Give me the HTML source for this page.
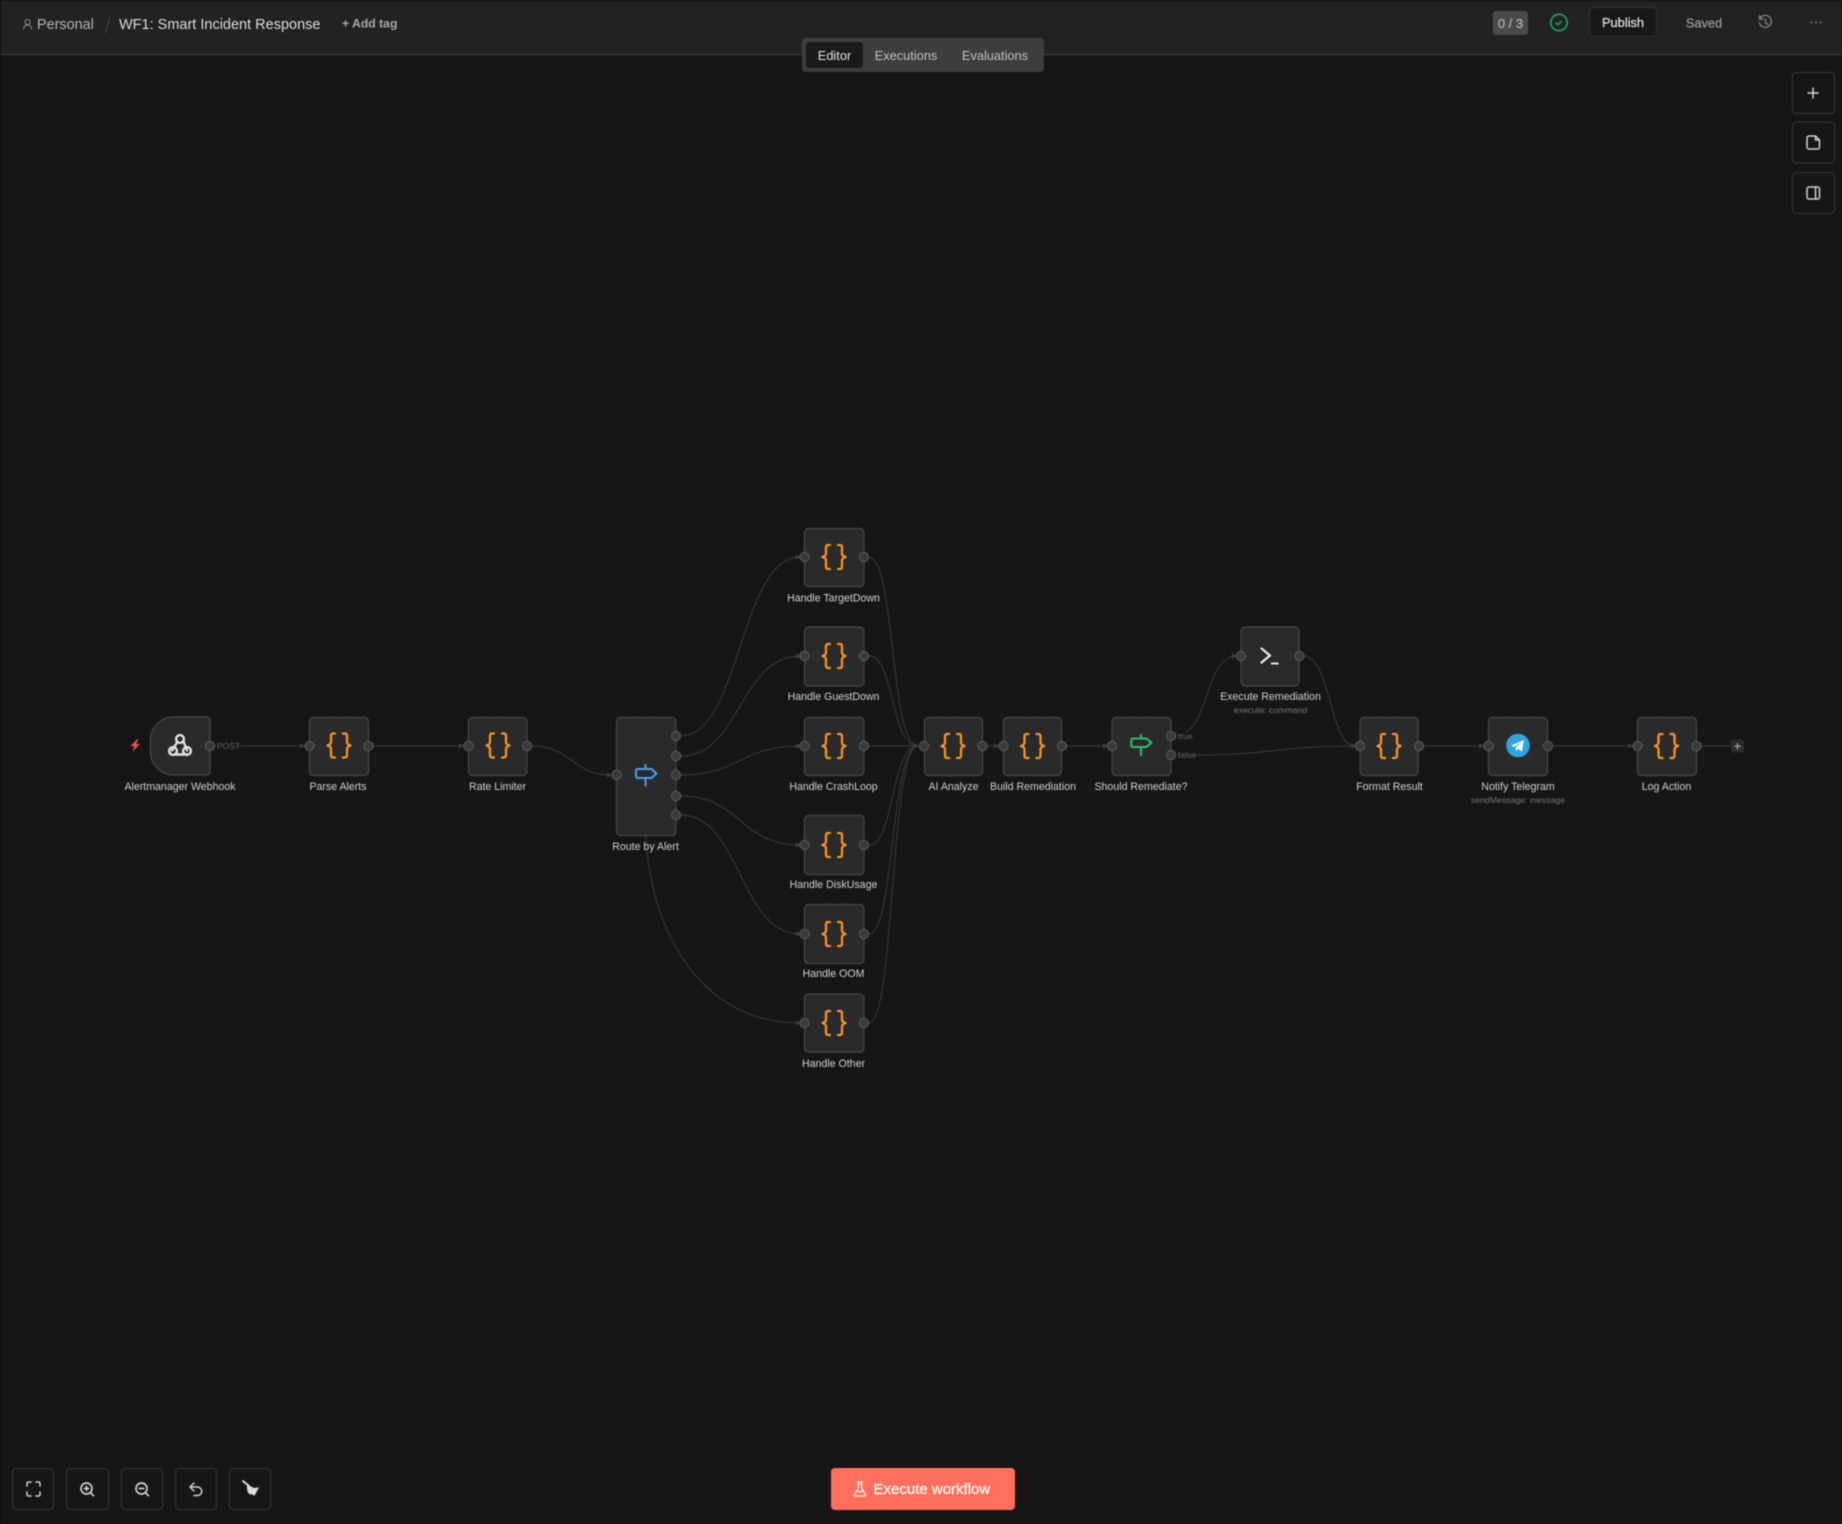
<!DOCTYPE html>
<html><head><meta charset="utf-8"><title>WF1: Smart Incident Response</title>
<style>
html,body{margin:0;padding:0;background:#161616;width:1842px;height:1524px;overflow:hidden}
svg{display:block;filter:blur(.4px)}
text{font-family:"Liberation Sans",sans-serif}
.n{fill:#2a2a2a;stroke:#484848;stroke-width:1.2}
.e{fill:none;stroke:#363636;stroke-width:1.2}
.p{fill:#3a3a3a;stroke:#565656;stroke-width:1.2}
.a{fill:#404040}
.b{fill:none;stroke:#f7931e;stroke-width:2.3;stroke-linecap:round;stroke-linejoin:round}
.l{font-size:10.6px;fill:#cfcfcf;text-anchor:middle}
.s{font-size:8.7px;fill:#777;text-anchor:middle}
.t{font-size:8.5px;fill:#666}
.c{fill:#161616;stroke:#383838;stroke-width:1.1}
.i{fill:none;stroke:#cfcfcf;stroke-width:1.5;stroke-linecap:round;stroke-linejoin:round}
.i2{fill:none;stroke:#bbb;stroke-width:1.5;stroke-linecap:round;stroke-linejoin:round}
</style></head><body>
<svg width="1842" height="1524" viewBox="0 0 1842 1524" xmlns="http://www.w3.org/2000/svg">
<defs><pattern id="g" width="19" height="19" patternUnits="userSpaceOnUse"><circle cx="9" cy="9" r=".8" fill="#1e1e1e"/></pattern></defs>
<rect width="1842" height="1524" fill="#161616"/>
<rect width="1842" height="1524" fill="url(#g)"/>

<!-- header -->
<rect x="0" y="0" width="1842" height="54" fill="#222"/>
<rect x="0" y="0" width="1842" height="1" fill="#111"/>
<rect x="0" y="54" width="1842" height="1.2" fill="#3d3d3d"/>
<rect x="0" y="0" width="1" height="1524" fill="#0e0e0e"/>
<g class="i2" style="stroke:#8f8f8f;stroke-width:1.1"><circle cx="27.500" cy="22" r="2.500"/><path d="M23.500 29c0-2.700 1.800-4 4-4s4 1.300 4 4"/></g>
<text x="37" y="29" font-size="14.400" fill="#b4b4b4">Personal</text>
<path d="M110 17 L105 33" stroke="#444" stroke-width="1.2"/>
<text x="119" y="29" font-size="14.500" fill="#dcdcdc">WF1: Smart Incident Response</text>
<text x="342" y="27.500" font-size="12.200" font-weight="bold" fill="#a8a8a8">+ Add tag</text>

<rect x="802" y="38" width="242" height="34" rx="4" fill="#3d3d3d"/>
<rect x="806" y="42" width="57" height="26" rx="4" fill="#1a1a1a"/>
<text x="834.500" y="60" font-size="12.800" fill="#e2e2e2" text-anchor="middle">Editor</text>
<text x="906" y="60" font-size="12.800" fill="#c0c0c0" text-anchor="middle">Executions</text>
<text x="995" y="60" font-size="12.800" fill="#c0c0c0" text-anchor="middle">Evaluations</text>

<rect x="1493" y="11" width="35" height="24" rx="3" fill="#4a4a4a"/>
<text x="1510.500" y="28" font-size="13" fill="#c8c8c8" text-anchor="middle">0 / 3</text>
<circle cx="1559" cy="22.500" r="8.200" fill="none" stroke="#1fa564" stroke-width="1.6"/>
<path d="M1555.800 23l2.200 1.800 3.400-3.400" fill="none" stroke="#1fa564" stroke-width="1.5" stroke-linecap="round" stroke-linejoin="round"/>
<rect x="1589.500" y="7.500" width="67" height="29" rx="4" fill="#181818" stroke="#343434"/>
<text x="1623" y="27" font-size="12.800" fill="#dcdcdc" stroke="#dcdcdc" stroke-width=".25" text-anchor="middle">Publish</text>
<text x="1704" y="27.500" font-size="12.800" fill="#9c9c9c" stroke="#9c9c9c" stroke-width=".25" text-anchor="middle">Saved</text>
<g class="i2" style="stroke:#8a8a8a;stroke-width:1.200"><path d="M1760 18.500a6 6 0 1 1-.600 4M1759.500 15.500v3.500h3.500"/><path d="M1765.500 19v4l2.500 1.500"/></g>
<g fill="#8c8c8c"><circle cx="1811.500" cy="22.500" r=".9"/><circle cx="1816" cy="22.500" r=".9"/><circle cx="1820.500" cy="22.500" r=".9"/></g>

<!-- right toolbar -->
<rect class="c" x="1792.500" y="72.500" width="42" height="41" rx="4"/>
<rect class="c" x="1792.500" y="122" width="42" height="41" rx="4"/>
<rect class="c" x="1792.500" y="172.500" width="42" height="41" rx="4"/>
<path class="i" d="M1813 88v10M1808 93h10"/>
<path class="i" d="M1807 138a2 2 0 0 1 2-2h6.500l4 4v7a2 2 0 0 1-2 2H1809a2 2 0 0 1-2-2zM1815.500 136v4h4"/>
<rect class="i" x="1807" y="187" width="12.500" height="12" rx="2"/><path class="i" d="M1815.500 187v12"/>

<!-- edges -->
<g class="e">
<path d="M238 746H304"/><path d="M373 746H463"/>
<path d="M532 746C572 746 572 775 611 775"/>
<path d="M681 736C740 736 740 557 800 557"/>
<path d="M681 756C740 756 740 656 800 656"/>
<path d="M681 775C740 775 740 746 800 746"/>
<path d="M681 796C740 796 740 845 800 845"/>
<path d="M681 815C740 815 740 934 800 934"/>
<path d="M646 835C650 930 700 1023 800 1023"/>
<path d="M869 557C895 557 890 746 918 746"/>
<path d="M869 656C895 656 890 746 918 746"/>
<path d="M869 746H918"/>
<path d="M869 845C895 845 890 746 918 746"/>
<path d="M869 934C895 934 890 746 918 746"/>
<path d="M869 1023C895 1023 890 746 918 746"/>
<path d="M987 746H998"/><path d="M1067 746H1107"/>
<path d="M1186 732C1208 720 1208 656 1236 656"/>
<path d="M1195 755C1275 755 1275 746 1355 746"/>
<path d="M1304 656C1330 656 1330 746 1355 746"/>
<path d="M1423 746H1483"/><path d="M1553 746H1632"/><path d="M1701 746H1731"/>
</g>
<g class="a">
<path d="M300 743.500l5 2.500-5 2.500z"/><path d="M459 743.500l5 2.500-5 2.500z"/><path d="M607 772.500l5 2.500-5 2.500z"/>
<path d="M796 554.500l5 2.500-5 2.500z"/><path d="M796 653.500l5 2.500-5 2.500z"/><path d="M796 743.500l5 2.500-5 2.500z"/>
<path d="M796 842.500l5 2.500-5 2.500z"/><path d="M796 931.500l5 2.500-5 2.500z"/><path d="M796 1020.500l5 2.500-5 2.500z"/>
<path d="M914 743.500l5 2.500-5 2.500z"/><path d="M994 743.500l5 2.500-5 2.500z"/><path d="M1103 743.500l5 2.500-5 2.500z"/>
<path d="M1232 653.500l5 2.500-5 2.500z"/><path d="M1351 743.500l5 2.500-5 2.500z"/><path d="M1479 743.500l5 2.500-5 2.500z"/><path d="M1628 743.500l5 2.500-5 2.500z"/>
</g>

<!-- nodes -->
<path class="n" d="M174 717H207a3 3 0 0 1 3 3V772a3 3 0 0 1-3 3H174C160 775 150.500 764 150.500 752V740C150.500 728 160 717 174 717Z"/>
<rect class="n" x="309.500" y="717.500" width="59" height="58" rx="4"/>
<rect class="n" x="468.500" y="717.500" width="58.500" height="58" rx="4"/>
<rect class="n" x="616.500" y="717.500" width="59.500" height="118" rx="4"/>
<rect class="n" x="804.500" y="528.500" width="59.500" height="58" rx="4"/>
<rect class="n" x="804.500" y="627" width="59.500" height="59" rx="4"/>
<rect class="n" x="804.500" y="717.500" width="59.500" height="58" rx="4"/>
<rect class="n" x="804.500" y="815.500" width="59.500" height="59" rx="4"/>
<rect class="n" x="804.500" y="904.500" width="59.500" height="59" rx="4"/>
<rect class="n" x="804.500" y="994" width="59.500" height="58" rx="4"/>
<rect class="n" x="924.500" y="717.500" width="58" height="58" rx="4"/>
<rect class="n" x="1003.500" y="717.500" width="58" height="58" rx="4"/>
<rect class="n" x="1112" y="717.500" width="59" height="58" rx="4"/>
<rect class="n" x="1241" y="627" width="58" height="59" rx="4"/>
<rect class="n" x="1360" y="717.500" width="58" height="58" rx="4"/>
<rect class="n" x="1488.500" y="717.500" width="59" height="58" rx="4"/>
<rect class="n" x="1637.500" y="717.500" width="59" height="58" rx="4"/>

<!-- ports -->
<g class="p">
<circle cx="210" cy="746" r="4.600"/>
<circle cx="309.500" cy="746" r="4.600"/><circle cx="368.500" cy="746" r="4.600"/>
<circle cx="468.500" cy="746" r="4.600"/><circle cx="527" cy="746" r="4.600"/>
<circle cx="616.500" cy="775" r="4.600"/>
<circle cx="676" cy="736" r="4.600"/><circle cx="676" cy="756" r="4.600"/><circle cx="676" cy="775" r="4.600"/><circle cx="676" cy="796" r="4.600"/><circle cx="676" cy="815" r="4.600"/>
<circle cx="804.500" cy="557" r="4.600"/><circle cx="864" cy="557" r="4.600"/>
<circle cx="804.500" cy="656" r="4.600"/><circle cx="864" cy="656" r="4.600"/>
<circle cx="804.500" cy="746" r="4.600"/><circle cx="864" cy="746" r="4.600"/>
<circle cx="804.500" cy="845" r="4.600"/><circle cx="864" cy="845" r="4.600"/>
<circle cx="804.500" cy="934" r="4.600"/><circle cx="864" cy="934" r="4.600"/>
<circle cx="804.500" cy="1023" r="4.600"/><circle cx="864" cy="1023" r="4.600"/>
<circle cx="924" cy="746" r="4.600"/><circle cx="982.500" cy="746" r="4.600"/>
<circle cx="1003.500" cy="746" r="4.600"/><circle cx="1062" cy="746" r="4.600"/>
<circle cx="1112" cy="746" r="4.600"/><circle cx="1171" cy="736" r="4.600"/><circle cx="1171" cy="755" r="4.600"/>
<circle cx="1241" cy="656" r="4.600"/><circle cx="1299.500" cy="656" r="4.600"/>
<circle cx="1360" cy="746" r="4.600"/><circle cx="1419" cy="746" r="4.600"/>
<circle cx="1488.500" cy="746" r="4.600"/><circle cx="1548" cy="746" r="4.600"/>
<circle cx="1637.500" cy="746" r="4.600"/><circle cx="1696.500" cy="746" r="4.600"/>
</g>

<!-- plus -->
<rect x="1731" y="739.500" width="13" height="13" rx="2" fill="#2c2c2c"/>
<path d="M1737.500 743v6.500M1734.200 746.200h6.600" stroke="#aaa" stroke-width="1.200"/>

<!-- code icons -->
<g class="b">
<path transform="translate(339 745.500)" d="M-4-12H-6Q-8-12-8-9.500V-3.500Q-8-1-11.500 0Q-8 1-8 3.500V9.500Q-8 12-6 12H-4M4-12H6Q8-12 8-9.500V-3.500Q8-1 11.500 0Q8 1 8 3.500V9.500Q8 12 6 12H4"/>
<path transform="translate(498 745.500)" d="M-4-12H-6Q-8-12-8-9.500V-3.500Q-8-1-11.500 0Q-8 1-8 3.500V9.500Q-8 12-6 12H-4M4-12H6Q8-12 8-9.500V-3.500Q8-1 11.500 0Q8 1 8 3.500V9.500Q8 12 6 12H4"/>
<path transform="translate(834 557)" d="M-4-12H-6Q-8-12-8-9.500V-3.500Q-8-1-11.500 0Q-8 1-8 3.500V9.500Q-8 12-6 12H-4M4-12H6Q8-12 8-9.500V-3.500Q8-1 11.500 0Q8 1 8 3.500V9.500Q8 12 6 12H4"/>
<path transform="translate(834 656)" d="M-4-12H-6Q-8-12-8-9.500V-3.500Q-8-1-11.500 0Q-8 1-8 3.500V9.500Q-8 12-6 12H-4M4-12H6Q8-12 8-9.500V-3.500Q8-1 11.500 0Q8 1 8 3.500V9.500Q8 12 6 12H4"/>
<path transform="translate(834 746)" d="M-4-12H-6Q-8-12-8-9.500V-3.500Q-8-1-11.500 0Q-8 1-8 3.500V9.500Q-8 12-6 12H-4M4-12H6Q8-12 8-9.500V-3.500Q8-1 11.500 0Q8 1 8 3.500V9.500Q8 12 6 12H4"/>
<path transform="translate(834 845)" d="M-4-12H-6Q-8-12-8-9.500V-3.500Q-8-1-11.500 0Q-8 1-8 3.500V9.500Q-8 12-6 12H-4M4-12H6Q8-12 8-9.500V-3.500Q8-1 11.500 0Q8 1 8 3.500V9.500Q8 12 6 12H4"/>
<path transform="translate(834 934)" d="M-4-12H-6Q-8-12-8-9.500V-3.500Q-8-1-11.500 0Q-8 1-8 3.500V9.500Q-8 12-6 12H-4M4-12H6Q8-12 8-9.500V-3.500Q8-1 11.500 0Q8 1 8 3.500V9.500Q8 12 6 12H4"/>
<path transform="translate(834 1023)" d="M-4-12H-6Q-8-12-8-9.500V-3.500Q-8-1-11.500 0Q-8 1-8 3.500V9.500Q-8 12-6 12H-4M4-12H6Q8-12 8-9.500V-3.500Q8-1 11.500 0Q8 1 8 3.500V9.500Q8 12 6 12H4"/>
<path transform="translate(953 746)" d="M-4-12H-6Q-8-12-8-9.500V-3.500Q-8-1-11.500 0Q-8 1-8 3.500V9.500Q-8 12-6 12H-4M4-12H6Q8-12 8-9.500V-3.500Q8-1 11.500 0Q8 1 8 3.500V9.500Q8 12 6 12H4"/>
<path transform="translate(1032.500 746)" d="M-4-12H-6Q-8-12-8-9.500V-3.500Q-8-1-11.500 0Q-8 1-8 3.500V9.500Q-8 12-6 12H-4M4-12H6Q8-12 8-9.500V-3.500Q8-1 11.500 0Q8 1 8 3.500V9.500Q8 12 6 12H4"/>
<path transform="translate(1389 746)" d="M-4-12H-6Q-8-12-8-9.500V-3.500Q-8-1-11.500 0Q-8 1-8 3.500V9.500Q-8 12-6 12H-4M4-12H6Q8-12 8-9.500V-3.500Q8-1 11.500 0Q8 1 8 3.500V9.500Q8 12 6 12H4"/>
<path transform="translate(1666.500 746)" d="M-4-12H-6Q-8-12-8-9.500V-3.500Q-8-1-11.500 0Q-8 1-8 3.500V9.500Q-8 12-6 12H-4M4-12H6Q8-12 8-9.500V-3.500Q8-1 11.500 0Q8 1 8 3.500V9.500Q8 12 6 12H4"/>
</g>

<!-- webhook -->
<g fill="none" stroke="#e2e2e2" stroke-width="2.400" stroke-linecap="round" stroke-linejoin="round">
<circle cx="180" cy="739" r="3.900"/><circle cx="173" cy="751" r="3.900"/><circle cx="187" cy="751" r="3.900"/>
<path d="M177 742.500L172 750.500M183.500 741.500L187 750.500M175 754.500H187"/>
</g>
<!-- bolt -->
<path d="M137.500 739l-7 7h3.800l-1.800 5.500 7.500-7.500h-3.900l2.400-5z" fill="#e0574a"/>

<!-- switch icons -->
<g fill="none" stroke="#4a9eed" stroke-width="2.100" stroke-linecap="round" stroke-linejoin="round"><path d="M645.500 765V769M645.500 778V785.500"/><path d="M637.500 769H651.500L656.500 773.500 651.500 778H637.500a1.500 1.500 0 0 1-1.500-1.500V770.500a1.500 1.500 0 0 1 1.500-1.500Z"/></g>
<g fill="none" stroke="#2dbb6e" stroke-width="2.100" stroke-linecap="round" stroke-linejoin="round"><path d="M1141 735V738.500M1141 747V755"/><path d="M1132.800 738.500H1146.500L1151.500 742.700 1146.500 747H1132.800a1.500 1.500 0 0 1-1.500-1.500V740a1.500 1.500 0 0 1 1.500-1.500Z"/></g>

<!-- terminal -->
<path d="M1261.500 648.500L1270 655.500 1261.500 662.500" fill="none" stroke="#e4e4e4" stroke-width="2.300" stroke-linecap="round" stroke-linejoin="round"/>
<path d="M1271 663.500H1278.500" stroke="#e4e4e4" stroke-width="2"/>

<!-- telegram -->
<circle cx="1518" cy="745.500" r="11.800" fill="#2ca5e0"/>
<path d="M1511 745.500L1524 740 1522 751.500 1518 749 1516 751 1515.500 747.500 1521.500 742.500 1514 747Z" fill="#eef6fb"/>

<!-- labels -->
<text class="t" x="217" y="749">POST</text>
<text class="t" x="1178" y="739">true</text>
<text class="t" x="1178" y="758">false</text>
<text class="l" x="180" y="790">Alertmanager Webhook</text>
<text class="l" x="338" y="790">Parse Alerts</text>
<text class="l" x="497.500" y="790">Rate Limiter</text>
<text class="l" x="645.500" y="850">Route by Alert</text>
<text class="l" x="833.500" y="601.500">Handle TargetDown</text>
<text class="l" x="833.500" y="700">Handle GuestDown</text>
<text class="l" x="833.500" y="790">Handle CrashLoop</text>
<text class="l" x="833.500" y="888">Handle DiskUsage</text>
<text class="l" x="833.500" y="977">Handle OOM</text>
<text class="l" x="833.500" y="1067">Handle Other</text>
<text class="l" x="953.500" y="790">AI Analyze</text>
<text class="l" x="1033" y="790">Build Remediation</text>
<text class="l" x="1141" y="790">Should Remediate?</text>
<text class="l" x="1270.500" y="700">Execute Remediation</text>
<text class="s" x="1270.500" y="713">execute: command</text>
<text class="l" x="1389.500" y="790">Format Result</text>
<text class="l" x="1518" y="790">Notify Telegram</text>
<text class="s" x="1518" y="803">sendMessage: message</text>
<text class="l" x="1666.500" y="790">Log Action</text>

<!-- bottom toolbar -->
<rect class="c" x="12.500" y="1468.500" width="41" height="41" rx="4"/>
<rect class="c" x="66.500" y="1468.500" width="42" height="41" rx="4"/>
<rect class="c" x="121.500" y="1468.500" width="41" height="41" rx="4"/>
<rect class="c" x="175.500" y="1468.500" width="41" height="41" rx="4"/>
<rect class="c" x="229.500" y="1468.500" width="41" height="41" rx="4"/>
<path class="i" d="M27 1486v-2.500a1.500 1.500 0 0 1 1.500-1.500H31M36 1482h2.500a1.500 1.500 0 0 1 1.500 1.500v2.500M40 1492v2.500a1.500 1.500 0 0 1-1.500 1.500H36M31 1496h-2.500a1.500 1.500 0 0 1-1.500-1.500V1492"/>
<g class="i" style="stroke-width:1.700"><circle cx="86.500" cy="1488.500" r="5.500"/><path d="M90.800 1493l2.700 2.700M84.500 1488.500h4M86.500 1486.500v4"/></g>
<g class="i" style="stroke-width:1.700"><circle cx="141.500" cy="1488.500" r="5.500"/><path d="M145.800 1493l2.700 2.700M139.300 1488.500h4.400"/></g>
<path class="i" d="M194 1483l-4 4 4 4M190 1487h7.500a4.200 4.200 0 0 1 0 8.500H194"/>
<path d="M243 1481l6 5" stroke="#ddd" stroke-width="1.800" stroke-linecap="round"/>
<path d="M247 1484.500l7 3.500 5-.800-4.500 8.500-3.500-2-1 1-2.500-3-.500-3.500z" fill="#ddd"/>

<!-- execute -->
<rect x="831" y="1468" width="184" height="42" rx="4" fill="#ff6f5c"/>
<g fill="none" stroke="#fff" stroke-opacity=".9" stroke-width="1.300" stroke-linecap="round" stroke-linejoin="round"><path d="M857.500 1482h5M858.500 1482v5.500l-3.800 7a1 1 0 0 0 .9 1.500h8.800a1 1 0 0 0 .9-1.500l-3.800-7V1482"/><path d="M856.500 1491.500h7"/></g>
<text x="873.500" y="1494" font-size="15" fill="#fff" stroke="#fff" stroke-width=".2">Execute workflow</text>
</svg>
</body></html>
